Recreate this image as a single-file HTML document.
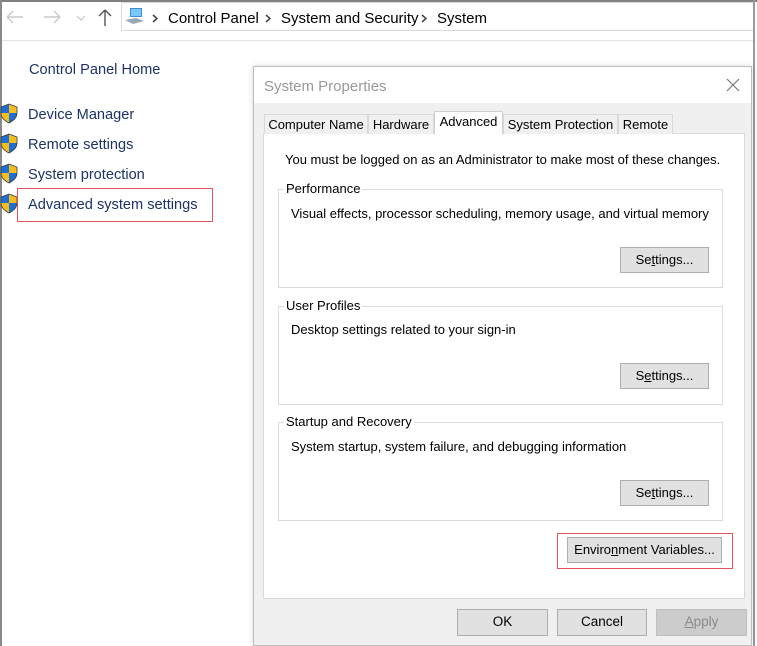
<!DOCTYPE html>
<html><head><style>
*{margin:0;padding:0;box-sizing:border-box}
body{width:757px;height:646px;background:#fff;position:relative;overflow:hidden;font-family:"Liberation Sans",sans-serif;}
.a{position:absolute}
.t{position:absolute;white-space:nowrap}
.lnk{color:#1c3366;font-size:14.6px}
.btn{position:absolute;background:#e1e1e1;border:1px solid #adadad;font-size:13px;color:#000;text-align:center;line-height:24px}
.grp{position:absolute;border:1px solid #dcdcdc}
.gl{position:absolute;background:#fff;font-size:13px;padding:0 2px;top:-9px;left:5px;line-height:16px}
.tab{position:absolute;top:114px;height:20px;background:#f0f0f0;border:1px solid #d9d9d9;border-bottom:none;font-size:13px;line-height:19px;text-align:center}
.dt{font-size:13px}
</style></head><body>
<div class="a" style="left:0;top:0;width:757px;height:2px;background:#808080"></div>
<div class="a" style="left:0;top:0;width:2px;height:646px;background:#8a8a8a"></div>
<div class="a" style="left:753px;top:0;width:2px;height:646px;background:#9a9a9a"></div>
<svg class="a" style="left:6px;top:10px" width="18" height="14"><path d="M1 7H17M1 7L7 1M1 7L7 13" stroke="#c8c8c8" stroke-width="1.4" fill="none"/></svg>
<svg class="a" style="left:43px;top:10px" width="18" height="14"><path d="M1 7H17M17 7L11 1M17 7L11 13" stroke="#c8c8c8" stroke-width="1.4" fill="none"/></svg>
<svg class="a" style="left:76px;top:15px" width="10" height="6"><path d="M1 1L5 5L9 1" stroke="#c8c8c8" stroke-width="1.2" fill="none"/></svg>
<svg class="a" style="left:98px;top:9px" width="14" height="18"><path d="M7 17V1M7 1L1 7M7 1L13 7" stroke="#555" stroke-width="1.4" fill="none"/></svg>
<div class="a" style="left:121px;top:2px;width:632px;height:29px;border:1px solid #d9d9d9;border-right:none"></div>
<svg class="a" style="left:124px;top:7px" width="22" height="18"><rect x="6" y="1" width="12" height="9" fill="#3a8fd8"/><rect x="7" y="2" width="10" height="7" fill="#7cc8f4"/><path d="M1 13 L12 11 L20 14 L9 17 Z" fill="#9aa6b2"/></svg>
<svg class="a" style="left:152px;top:14px" width="6" height="9"><path d="M1 1L5 4.5L1 8" stroke="#444" stroke-width="1.5" fill="none"/></svg>
<div class="t" style="left:168px;top:10px;font-size:15px;color:#000">Control Panel</div>
<svg class="a" style="left:265px;top:14px" width="6" height="9"><path d="M1 1L5 4.5L1 8" stroke="#444" stroke-width="1.5" fill="none"/></svg>
<div class="t" style="left:281px;top:10px;font-size:15px;color:#000">System and Security</div>
<svg class="a" style="left:421px;top:14px" width="6" height="9"><path d="M1 1L5 4.5L1 8" stroke="#444" stroke-width="1.5" fill="none"/></svg>
<div class="t" style="left:437px;top:10px;font-size:15px;color:#000">System</div>
<div class="a" style="left:2px;top:40px;width:751px;height:1px;background:#e3e3e3"></div>
<div class="t lnk" style="left:29px;top:62px">Control Panel Home</div>
<svg width="0" height="0"><defs><g id="sh"><path d="M9 1 L17 4 L17 10 C17 15 13 18 9 20 C5 18 1 15 1 10 L1 4 Z" fill="#1f6fd0"/><path d="M9 1 L17 4 L17 10 L9 10 Z" fill="#f6bd21"/><path d="M1 10 L9 10 L9 20 C5 18 1 15 1 10 Z" fill="#f6bd21"/><path d="M9 1 L17 4 L17 10 C17 15 13 18 9 20 C5 18 1 15 1 10 L1 4 Z" fill="none" stroke="#3a3a3a" stroke-width="0.8"/></g></defs></svg>
<svg class="a" style="left:0;top:103px" width="19" height="21"><use href="#sh"/></svg>
<svg class="a" style="left:0;top:133px" width="19" height="21"><use href="#sh"/></svg>
<svg class="a" style="left:0;top:163px" width="19" height="21"><use href="#sh"/></svg>
<svg class="a" style="left:0;top:193px" width="19" height="21"><use href="#sh"/></svg>
<div class="t lnk" style="left:28px;top:107px">Device Manager</div>
<div class="t lnk" style="left:28px;top:137px">Remote settings</div>
<div class="t lnk" style="left:28px;top:167px">System protection</div>
<div class="t lnk" style="left:28px;top:197px">Advanced system settings</div>
<div class="a" style="left:17px;top:188px;width:196px;height:34px;border:1px solid #e8525c"></div>
<div class="a" style="left:253px;top:66px;width:499px;height:580px;background:#f0f0f0;border:1px solid #bdbdbd;box-shadow:0 0 6px rgba(0,0,0,.15)"></div>
<div class="a" style="left:254px;top:67px;width:497px;height:36px;background:#fff"></div>
<div class="t" style="left:264px;top:78px;font-size:15px;color:#999">System Properties</div>
<svg class="a" style="left:726px;top:78px" width="14" height="14"><path d="M1 1L13 13M13 1L1 13" stroke="#777" stroke-width="1.2"/></svg>
<div class="a" style="left:263px;top:133px;width:482px;height:466px;background:#fff;border:1px solid #d9d9d9"></div>
<div class="tab" style="left:264px;width:104px">Computer Name</div>
<div class="tab" style="left:368px;width:66px">Hardware</div>
<div class="tab" style="left:434px;top:111px;height:23px;width:69px;background:#fff;border-color:#d0d0d0">Advanced</div>
<div class="tab" style="left:503px;width:115px">System Protection</div>
<div class="tab" style="left:618px;width:55px">Remote</div>
<div class="t dt" style="left:285px;top:152px">You must be logged on as an Administrator to make most of these changes.</div>
<div class="grp" style="left:278px;top:189px;width:445px;height:99px"><div class="gl">Performance</div></div>
<div class="t dt" style="left:291px;top:206px">Visual effects, processor scheduling, memory usage, and virtual memory</div>
<div class="btn" style="left:620px;top:247px;width:89px;height:26px">Se<u>t</u>tings...</div>
<div class="grp" style="left:278px;top:306px;width:445px;height:99px"><div class="gl">User Profiles</div></div>
<div class="t dt" style="left:291px;top:322px">Desktop settings related to your sign-in</div>
<div class="btn" style="left:620px;top:363px;width:89px;height:26px">S<u>e</u>ttings...</div>
<div class="grp" style="left:278px;top:422px;width:445px;height:99px"><div class="gl">Startup and Recovery</div></div>
<div class="t dt" style="left:291px;top:439px">System startup, system failure, and debugging information</div>
<div class="btn" style="left:620px;top:480px;width:89px;height:26px">Se<u>t</u>tings...</div>
<div class="btn" style="left:567px;top:537px;width:155px;height:26px">Enviro<u>n</u>ment Variables...</div>
<div class="a" style="left:557px;top:533px;width:176px;height:36px;border:1px solid #e8525c"></div>
<div class="btn" style="left:457px;top:609px;width:91px;height:27px;font-size:13.5px">OK</div>
<div class="btn" style="left:557px;top:609px;width:90px;height:27px;font-size:13.5px">Cancel</div>
<div class="btn" style="left:656px;top:609px;width:91px;height:27px;font-size:13.5px;background:#cccccc;border-color:#bfbfbf;color:#8a8a8a"><u>A</u>pply</div>
</body></html>
